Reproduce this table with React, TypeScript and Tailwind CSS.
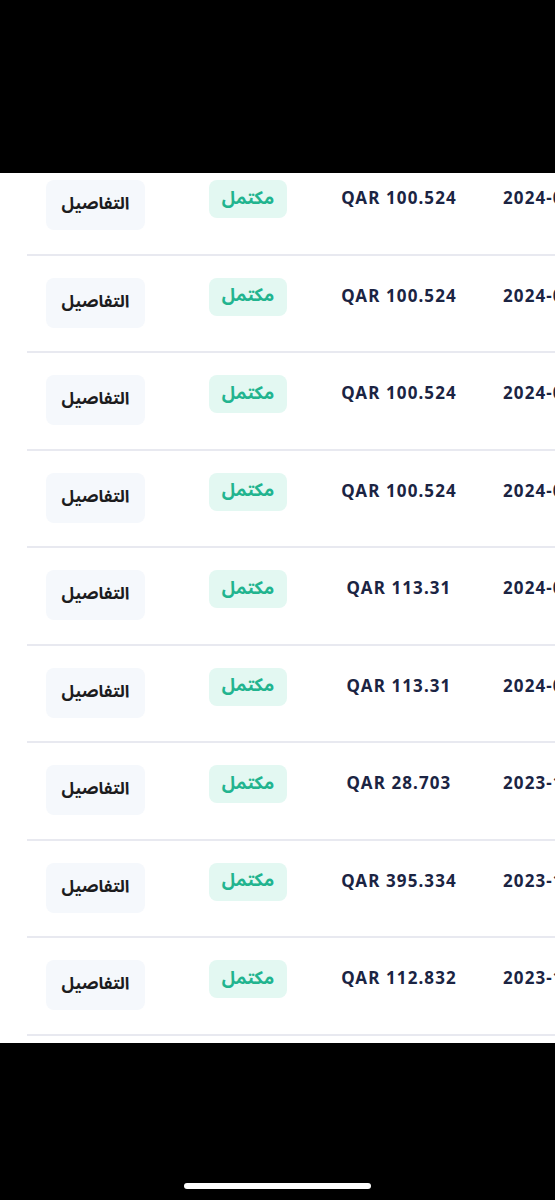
const ROWS = [
  { amount: 'QAR 100.524', date: '2024-03-12' },
  { amount: 'QAR 100.524', date: '2024-03-12' },
  { amount: 'QAR 100.524', date: '2024-02-12' },
  { amount: 'QAR 100.524', date: '2024-01-12' },
  { amount: 'QAR 113.31', date: '2024-01-03' },
  { amount: 'QAR 113.31', date: '2024-01-03' },
  { amount: 'QAR 28.703', date: '2023-12-20' },
  { amount: 'QAR 395.334', date: '2023-12-01' },
  { amount: 'QAR 112.832', date: '2023-11-12' },
];

const arabic = { fontFamily: '"Noto Sans Arabic", "DejaVu Sans", sans-serif' };

function PaymentRow({ amount, date }: { amount: string; date: string }) {
  return (
    <div className="flex h-[97.5px] w-[700px] shrink-0 border-b-2 border-[#e8e9f0]">
      {/* details */}
      <div className="flex w-[137px] justify-center pt-[22px]">
        <button
          className="h-[50px] w-[99px] rounded-lg bg-[#f5f8fc] text-[17px] font-bold text-[#1c1c1e]"
          style={arabic}
          dir="rtl"
        >
          التفاصيل
        </button>
      </div>
      {/* status */}
      <div className="flex w-[168px] justify-center pt-[22px]">
        <span
          className="flex h-[38px] w-[78px] items-center justify-center rounded-lg bg-[#e3f8f2] pb-[2px] text-[18px] font-bold text-[#22b48f]"
          style={arabic}
          dir="rtl"
        >
          مكتمل
        </span>
      </div>
      {/* amount */}
      <div className="w-[134px] pt-[27px] text-center font-['Noto_Sans',sans-serif] text-[17px] font-bold tracking-[1.1px] text-[#1b2443]">
        {amount}
      </div>
      {/* date */}
      <div className="pl-[37px] pt-[27px] font-['Noto_Sans',sans-serif] text-[17px] font-bold tracking-[1.1px] text-[#1b2443]">
        {date}
      </div>
    </div>
  );
}

export default function App() {
  return (
    <div className="flex h-[1200px] w-[555px] flex-col overflow-hidden bg-black">
      <div className="h-[173px] shrink-0" />
      <div className="h-[870px] shrink-0 overflow-hidden bg-white">
        <div className="-mt-[15px] flex flex-col pl-[27px]">
          {ROWS.map((r, i) => (
            <PaymentRow key={i} amount={r.amount} date={r.date} />
          ))}
        </div>
      </div>
      <div className="flex flex-1 items-end justify-center pb-[11px]">
        <div className="h-[6px] w-[187px] rounded-full bg-white" />
      </div>
    </div>
  );
}
